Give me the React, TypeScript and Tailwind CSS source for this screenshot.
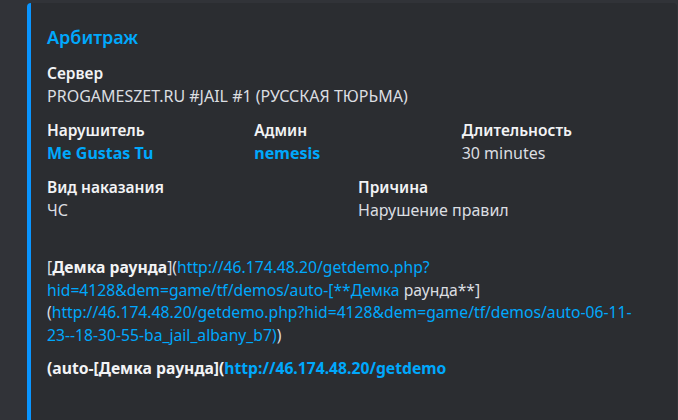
export default function App() {
  const font = { fontFamily: '"Noto Sans", "Open Sans", sans-serif' };
  return (
    <div className="w-[678px] h-[420px] overflow-hidden bg-[#313338] pt-[3px] pl-[27px] pr-[1px]" style={font}>
      <div className="h-[430px] rounded-[4px] border-l-4 border-[#0a95ff] bg-[#2b2d31] pl-4 pr-4 pt-[22px] text-[16px]">
        <div className="text-[18px] font-semibold leading-[24px] text-[#00a8fc]">Арбитраж</div>

        <div className="mt-3">
          <div className="text-[15.5px] font-semibold leading-[24px] text-[#f2f3f5]">Сервер</div>
          <div className="leading-[22px] text-[#dbdee1]">PROGAMESZET.RU #JAIL #1 (РУССКАЯ ТЮРЬМА)</div>
        </div>

        <div className="mt-[11px] grid grid-cols-3 gap-x-2">
          <div>
            <div className="text-[15.5px] font-semibold leading-[24px] text-[#f2f3f5]">Нарушитель</div>
            <div className="font-bold leading-[22px] text-[#00a8fc]">Me Gustas Tu</div>
          </div>
          <div>
            <div className="text-[15.5px] font-semibold leading-[24px] text-[#f2f3f5]">Админ</div>
            <div className="font-bold leading-[22px] text-[#00a8fc]">nemesis</div>
          </div>
          <div>
            <div className="text-[15.5px] font-semibold leading-[24px] text-[#f2f3f5]">Длительность</div>
            <div className="leading-[22px] text-[#dbdee1]">30 minutes</div>
          </div>
        </div>

        <div className="mt-[11px] grid grid-cols-2 gap-x-2">
          <div>
            <div className="text-[15.5px] font-semibold leading-[24px] text-[#f2f3f5]">Вид наказания</div>
            <div className="leading-[22px] text-[#dbdee1]">ЧС</div>
          </div>
          <div>
            <div className="text-[15.5px] font-semibold leading-[24px] text-[#f2f3f5]">Причина</div>
            <div className="leading-[22px] text-[#dbdee1]">Нарушение правил</div>
          </div>
        </div>

        <div className="mt-[11px]">
          <div className="h-[24px]" />
          <div className="text-[15.7px] leading-[22.5px] text-[#dbdee1]">
            [<span className="font-bold text-[#f2f3f5]">Демка раунда</span>](
            <span className="text-[#00a8fc]">http://46.174.48.20/getdemo.php?</span>
            <br />
            <span className="text-[#00a8fc]">hid=4128&amp;dem=game/tf/demos/auto-[**Демка</span> раунда**]
            <br />
            (<span className="text-[#00a8fc]">http://46.174.48.20/getdemo.php?hid=4128&amp;dem=game/tf/demos/auto-06-11-</span>
            <br />
            <span className="text-[#00a8fc]">23--18-30-55-ba_jail_albany_b7)</span>)
          </div>
        </div>

        <div className="mt-[10px] text-[15.7px] font-bold leading-[24px] text-[#f2f3f5]">
          (auto-[Демка раунда](<span className="text-[#00a8fc]">http://46.174.48.20/getdemo</span>
        </div>
      </div>
    </div>
  );
}
